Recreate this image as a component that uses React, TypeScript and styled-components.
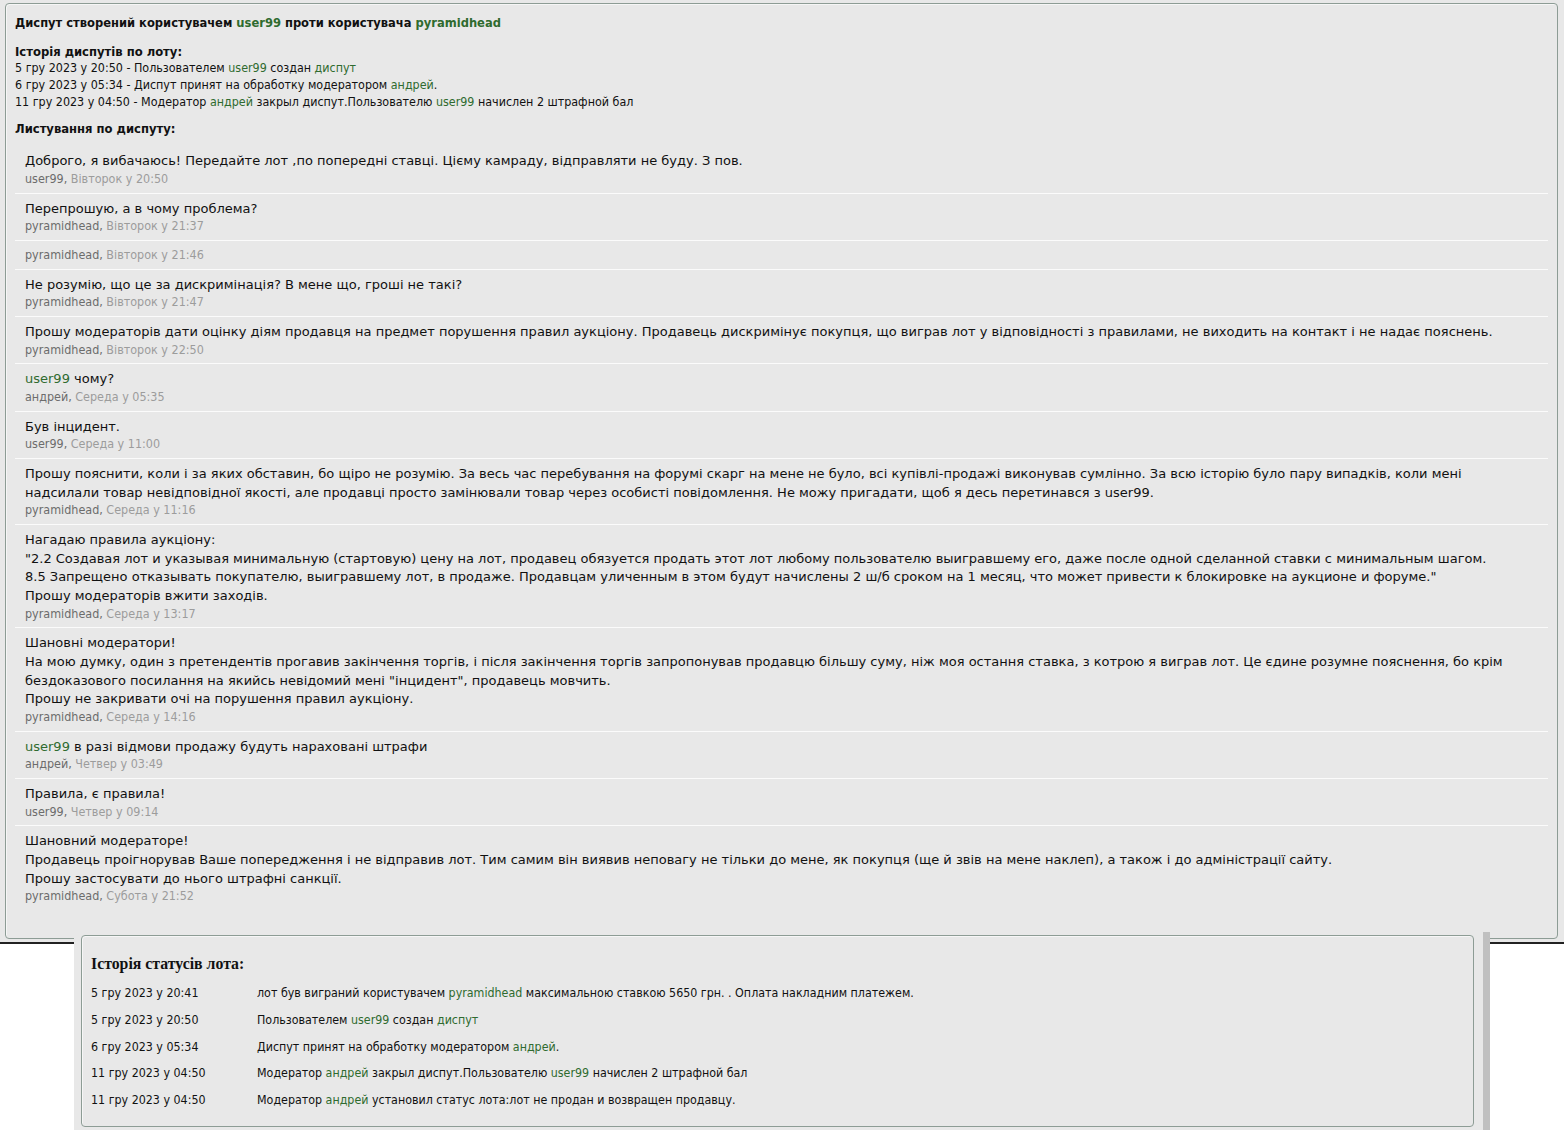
import React from "react";
import styled, { createGlobalStyle } from "styled-components";

const GlobalStyle = createGlobalStyle`
  body {
    margin: 0;
    background: #ffffff;
    color: #111;
  }
`;

const narrow = `"DejaVu Sans Condensed", "DejaVu Sans", sans-serif`;
const wide = `"DejaVu Sans", Verdana, sans-serif`;

const TopArea = styled.div`
  background: #e8e8e8;
  padding: 3px 6px 3px 5px;
  border-bottom: 2px solid #222;
`;

const Panel = styled.section`
  background: #e8e8e8;
  border: 1px solid #8d9c95;
  border-radius: 4px;
  box-shadow: inset 1px 1px 0 #f6f6f6;
  padding: 11px 9px 28px 9px;
`;

const Title = styled.h1`
  margin: 0;
  font-family: ${narrow};
  font-size: 12.8px;
  font-weight: bold;
  line-height: 16px;
  color: #111;
`;

const SubHeading = styled.h2<{ $gap: number }>`
  margin: ${(p) => p.$gap}px 0 0;
  font-family: ${narrow};
  font-size: 12.9px;
  font-weight: bold;
  line-height: 16.67px;
  color: #111;
`;

const HistoryLine = styled.div`
  font-family: ${narrow};
  font-size: 12.4px;
  line-height: 16.67px;
  color: #111;
`;

const Link = styled.a`
  color: #2f6b2f;
  text-decoration: none;
`;

const MessageList = styled.div`
  margin-top: 9px;
`;

const Message = styled.div`
  padding: 6px 10px 5px;
  border-bottom: 1px solid #fbfbfb;

  &:last-child {
    border-bottom: none;
  }
`;

const MessageText = styled.div`
  font-family: ${wide};
  font-size: 13px;
  line-height: 18.67px;
  color: #111;
`;

const Meta = styled.div`
  font-family: ${narrow};
  font-size: 12.45px;
  line-height: 16.67px;
  color: #6c6c6c;
`;

const When = styled.span`
  color: #9c9c9c;
`;

const StatusArea = styled.div`
  position: relative;
  margin: -12px 0 0 74px;
  width: 1393px;
  background: #e8e8e8;
  border-right: 7px solid #c0c0c0;
  padding: 3px 9px 6px 7px;
`;

const StatusBox = styled.section`
  border: 1px solid #8d9c95;
  border-radius: 4px;
  box-shadow: inset 1px 1px 0 #f6f6f6;
  padding: 19px 10px 12px 9px;
`;

const StatusTitle = styled.h3`
  margin: 0 0 6.6px;
  font-family: "Liberation Serif", "Times New Roman", serif;
  font-size: 15.8px;
  font-weight: bold;
  line-height: 18px;
  color: #111;
`;

const StatusTable = styled.table`
  border-collapse: collapse;
  font-family: ${narrow};
  font-size: 12.35px;
  color: #111;
`;

const StatusRow = styled.tr`
  height: 26.75px;
`;

const DateCell = styled.td`
  width: 166px;
  padding: 0;
  vertical-align: middle;
`;

const TextCell = styled.td`
  padding: 0;
  vertical-align: middle;
`;

type Msg = { text?: React.ReactNode; author: string; when: string };

const U = ({ children }: { children: React.ReactNode }) => <Link href="#">{children}</Link>;

const messages: Msg[] = [
  {
    text: "Доброго, я вибачаюсь! Передайте лот ,по попередні ставці. Цієму камраду, відправляти не буду. З пов.",
    author: "user99",
    when: "Вівторок у 20:50",
  },
  { text: "Перепрошую, а в чому проблема?", author: "pyramidhead", when: "Вівторок у 21:37" },
  { author: "pyramidhead", when: "Вівторок у 21:46" },
  {
    text: "Не розумію, що це за дискримінація? В мене що, гроші не такі?",
    author: "pyramidhead",
    when: "Вівторок у 21:47",
  },
  {
    text: "Прошу модераторів дати оцінку діям продавця на предмет порушення правил аукціону. Продавець дискримінує покупця, що виграв лот у відповідності з правилами, не виходить на контакт і не надає пояснень.",
    author: "pyramidhead",
    when: "Вівторок у 22:50",
  },
  {
    text: (
      <>
        <U>user99</U> чому?
      </>
    ),
    author: "андрей",
    when: "Середа у 05:35",
  },
  { text: "Був інцидент.", author: "user99", when: "Середа у 11:00" },
  {
    text: (
      <>
        Прошу пояснити, коли і за яких обставин, бо щіро не розумію. За весь час перебування на форумі скарг на мене не
        було, всі купівлі-продажі виконував сумлінно. За всю історію було пару випадків, коли мені
        <br />
        надсилали товар невідповідної якості, але продавці просто замінювали товар через особисті повідомлення. Не можу
        пригадати, щоб я десь перетинався з user99.
      </>
    ),
    author: "pyramidhead",
    when: "Середа у 11:16",
  },
  {
    text: (
      <>
        Нагадаю правила аукціону:
        <br />
        "2.2 Создавая лот и указывая минимальную (стартовую) цену на лот, продавец обязуется продать этот лот любому
        пользователю выигравшему его, даже после одной сделанной ставки с минимальным шагом.
        <br />
        8.5 Запрещено отказывать покупателю, выигравшему лот, в продаже. Продавцам уличенным в этом будут начислены 2 ш/б
        сроком на 1 месяц, что может привести к блокировке на аукционе и форуме."
        <br />
        Прошу модераторів вжити заходів.
      </>
    ),
    author: "pyramidhead",
    when: "Середа у 13:17",
  },
  {
    text: (
      <>
        Шановні модератори!
        <br />
        На мою думку, один з претендентів прогавив закінчення торгів, і після закінчення торгів запропонував продавцю
        більшу суму, ніж моя остання ставка, з котрою я виграв лот. Це єдине розумне пояснення, бо крім
        <br />
        бездоказового посилання на якийсь невідомий мені "інцидент", продавець мовчить.
        <br />
        Прошу не закривати очі на порушення правил аукціону.
      </>
    ),
    author: "pyramidhead",
    when: "Середа у 14:16",
  },
  {
    text: (
      <>
        <U>user99</U> в разі відмови продажу будуть нараховані штрафи
      </>
    ),
    author: "андрей",
    when: "Четвер у 03:49",
  },
  { text: "Правила, є правила!", author: "user99", when: "Четвер у 09:14" },
  {
    text: (
      <>
        Шановний модераторе!
        <br />
        Продавець проігнорував Ваше попередження і не відправив лот. Тим самим він виявив неповагу не тільки до мене, як
        покупця (ще й звів на мене наклеп), а також і до адміністрації сайту.
        <br />
        Прошу застосувати до нього штрафні санкції.
      </>
    ),
    author: "pyramidhead",
    when: "Субота у 21:52",
  },
];

const statuses: { date: string; text: React.ReactNode }[] = [
  {
    date: "5 гру 2023 у 20:41",
    text: (
      <>
        лот був виграний користувачем <U>pyramidhead</U> максимальною ставкою 5650 грн. . Оплата накладним платежем.
      </>
    ),
  },
  {
    date: "5 гру 2023 у 20:50",
    text: (
      <>
        Пользователем <U>user99</U> создан <U>диспут</U>
      </>
    ),
  },
  {
    date: "6 гру 2023 у 05:34",
    text: (
      <>
        Диспут принят на обработку модератором <U>андрей</U>.
      </>
    ),
  },
  {
    date: "11 гру 2023 у 04:50",
    text: (
      <>
        Модератор <U>андрей</U> закрыл диспут.Пользователю <U>user99</U> начислен 2 штрафной бал
      </>
    ),
  },
  {
    date: "11 гру 2023 у 04:50",
    text: (
      <>
        Модератор <U>андрей</U> установил статус лота:лот не продан и возвращен продавцу.
      </>
    ),
  },
];

export default function App() {
  return (
    <>
      <GlobalStyle />
      <TopArea>
        <Panel>
          <Title>
            Диспут створений користувачем <U>user99</U> проти користувача <U>pyramidhead</U>
          </Title>

          <SubHeading $gap={12.67}>Історія диспутів по лоту:</SubHeading>
          <HistoryLine>
            5 гру 2023 у 20:50 - Пользователем <U>user99</U> создан <U>диспут</U>
          </HistoryLine>
          <HistoryLine>
            6 гру 2023 у 05:34 - Диспут принят на обработку модератором <U>андрей</U>.
          </HistoryLine>
          <HistoryLine>
            11 гру 2023 у 04:50 - Модератор <U>андрей</U> закрыл диспут.Пользователю <U>user99</U> начислен 2 штрафной
            бал
          </HistoryLine>

          <SubHeading $gap={10.3}>Листування по диспуту:</SubHeading>
          <MessageList>
            {messages.map((m, i) => (
              <Message key={i}>
                {m.text && <MessageText>{m.text}</MessageText>}
                <Meta>
                  {m.author}, <When>{m.when}</When>
                </Meta>
              </Message>
            ))}
          </MessageList>
        </Panel>
      </TopArea>

      <StatusArea>
        <StatusBox>
          <StatusTitle>Історія статусів лота:</StatusTitle>
          <StatusTable>
            <tbody>
              {statuses.map((s, i) => (
                <StatusRow key={i}>
                  <DateCell>{s.date}</DateCell>
                  <TextCell>{s.text}</TextCell>
                </StatusRow>
              ))}
            </tbody>
          </StatusTable>
        </StatusBox>
      </StatusArea>
    </>
  );
}
